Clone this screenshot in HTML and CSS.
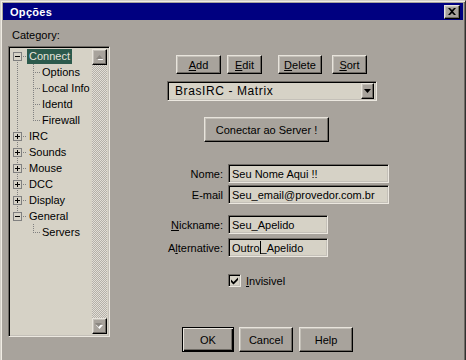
FILE: index.html
```html
<!DOCTYPE html>
<html lang="pt">
<head>
  <meta charset="UTF-8" />
  <title>Opções</title>
  <link rel="stylesheet" href="styles.css">
</head>
<body>
  <div class="window">
    <div class="titlebar">
      <span class="title">Opções</span>
      <span class="close raised">
        <svg width="8" height="7" viewBox="0 0 8 7"><path d="M0 0h2l2 2 2-2h2L5 3.5 8 7H6L4 5 2 7H0l3-3.5z" fill="#000"/></svg>
      </span>
    </div>

    <div class="dialog">
      <div class="left">
        <div class="cat-label">Category:</div>
        <div class="tree sunken">
          <ul class="tree-list">
            <li class="node"><span class="exp minus"></span><span class="conn"></span><span class="label selected">Connect</span></li>
            <li class="leaf"><span class="branch"></span><span class="label">Options</span></li>
            <li class="leaf"><span class="branch"></span><span class="label">Local Info</span></li>
            <li class="leaf"><span class="branch"></span><span class="label">Identd</span></li>
            <li class="leaf"><span class="branch last"></span><span class="label">Firewall</span></li>
            <li class="node"><span class="exp plus"></span><span class="conn"></span><span class="label">IRC</span></li>
            <li class="node"><span class="exp plus"></span><span class="conn"></span><span class="label">Sounds</span></li>
            <li class="node"><span class="exp plus"></span><span class="conn"></span><span class="label">Mouse</span></li>
            <li class="node"><span class="exp plus"></span><span class="conn"></span><span class="label">DCC</span></li>
            <li class="node"><span class="exp plus"></span><span class="conn"></span><span class="label">Display</span></li>
            <li class="node"><span class="exp minus"></span><span class="conn"></span><span class="label">General</span></li>
            <li class="leaf"><span class="branch last"></span><span class="label">Servers</span></li>
          </ul>
          <div class="scrollbar">
            <span class="sb-btn raised">
              <svg width="7" height="5" viewBox="0 0 7 5"><path d="M3.5 1 6.5 4h-6z" fill="#fff" transform="translate(1 1)"/><path d="M3.5 0 7 4H0z" fill="#8a8680"/></svg>
            </span>
            <span class="sb-track"></span>
            <span class="sb-btn raised">
              <svg width="8" height="6" viewBox="0 0 8 6"><path d="M0 1h7L3.5 5z" fill="#fff" transform="translate(1 1)"/><path d="M0 0h7L3.5 4z" fill="#8a8680"/></svg>
            </span>
          </div>
        </div>
      </div>

      <div class="right">
        <div class="toolbar">
          <span class="btn raised w-add"><u>A</u>dd</span>
          <span class="btn raised w-edit"><u>E</u>dit</span>
          <span class="btn raised w-delete"><u>D</u>elete</span>
          <span class="btn raised w-sort"><u>S</u>ort</span>
        </div>

        <div class="combo sunken">
          <span class="combo-text">BrasIRC - Matrix</span>
          <span class="combo-btn raised">
            <svg width="7" height="4" viewBox="0 0 7 4"><path d="M0 0h7L3.5 4z" fill="#000"/></svg>
          </span>
        </div>

        <span class="btn raised connect">Conectar ao Server !</span>

        <div class="fields">
          <label class="f-label">Nome:</label>
          <span class="field sunken">Seu Nome Aqui !!</span>
          <label class="f-label">E-mail</label>
          <span class="field sunken">Seu_email@provedor.com.br</span>
        </div>

        <div class="fields nick">
          <label class="f-label"><u>N</u>ickname:</label>
          <span class="field sunken">Seu_Apelido</span>
          <label class="f-label">A<u>l</u>ternative:</label>
          <span class="field sunken">Outro<i class="caret"></i>_Apelido</span>
        </div>

        <div class="check-row">
          <span class="checkbox sunken">
            <svg width="9" height="9" viewBox="0 0 9 9"><path d="M1 3.5 3.5 6 8 1.5V4L3.5 8.5 1 6z" fill="#000"/></svg>
          </span>
          <span><u>I</u>nvisivel</span>
        </div>

        <div class="actions">
          <span class="btn default w-ok">OK</span>
          <span class="btn raised w-cancel">Cancel</span>
          <span class="btn raised w-help">Help</span>
        </div>
      </div>
    </div>
  </div>
</body>
</html>
```

FILE: styles.css
```css
body {
  margin: 0;
  font-family: 'Liberation Sans', Arial, sans-serif;
  font-size: 11px;
  color: #000;
  background: #a8a39c;
}

.window {
  width: 466px;
  height: 362px;
  box-sizing: border-box;
  padding: 2px;
  border: 1px solid;
  border-color: #d4d0c8 #303030 #303030 #d4d0c8;
  box-shadow: inset 1px 1px #f0ece4, inset -1px -1px #6e6a64;
  background: #a8a39c;
  overflow: hidden;
}

.titlebar {
  height: 17px;
  background: #000080;
  display: flex;
  align-items: center;
  padding: 0 3px 0 7px;
}

.title {
  color: #fff;
  font-weight: bold;
  font-size: 11px;
  letter-spacing: 0.3px;
  flex: 1;
}

/* 3d borders */
.raised {
  box-sizing: border-box;
  border: 1px solid;
  border-color: #e8e4dc #000 #000 #e8e4dc;
  box-shadow: inset -1px -1px #6e6a64, inset 1px 1px #c4c0b8;
  background: #a8a39c;
}

.sunken {
  box-sizing: border-box;
  border: 1px solid;
  border-color: #6e6a64 #ece8e0 #ece8e0 #6e6a64;
  box-shadow: inset 1px 1px #000, inset -1px -1px #c4c0b8;
  background: #d6d2c6;
}

.close {
  width: 16px;
  height: 14px;
  display: flex;
  align-items: center;
  justify-content: center;
}

.dialog {
  display: flex;
}

/* left column */
.left {
  padding-left: 5px;
  width: 102px;
}

.cat-label {
  padding-left: 4px;
  margin-top: 9px;
  line-height: 13px;
}

.tree {
  margin-top: 4px;
  height: 291px;
  display: flex;
  padding: 2px;
}

.tree-list {
  list-style: none;
  margin: -1px 0 0;
  padding: 0;
  flex: 1;
  background: repeating-linear-gradient(to bottom, #808080 0 1px, transparent 1px 2px) 6px 8px / 1px 160px no-repeat;
}

.tree-list li {
  height: 16px;
  display: flex;
  align-items: center;
}

.exp {
  width: 9px;
  height: 9px;
  margin-left: 2px;
  box-sizing: border-box;
  border: 1px solid #808080;
  background: #d6d2c6;
  display: flex;
  align-items: center;
  justify-content: center;
}

.exp::before {
  content: "";
  width: 5px;
  height: 1px;
  background: #000;
}

.plus {
  background-image: linear-gradient(#000, #000);
  background-size: 1px 5px;
  background-position: center;
  background-repeat: no-repeat;
}

.conn {
  width: 5px;
  height: 1px;
  background: repeating-linear-gradient(to right, transparent 0 1px, #808080 1px 2px);
}

.label {
  padding: 1px 2px;
  line-height: 13px;
  white-space: nowrap;
}

.selected {
  background: #2c5a4c;
  color: #e8e4dc;
}

.leaf {
  padding-left: 22px;
}

.branch {
  width: 7px;
  height: 16px;
  align-self: stretch;
  background:
    repeating-linear-gradient(to bottom, #808080 0 1px, transparent 1px 2px) 0 0 / 1px 100% no-repeat,
    repeating-linear-gradient(to right, #808080 0 1px, transparent 1px 2px) 0 8px / 100% 1px no-repeat;
}

.branch.last {
  background:
    repeating-linear-gradient(to bottom, #808080 0 1px, transparent 1px 2px) 0 0 / 1px 9px no-repeat,
    repeating-linear-gradient(to right, #808080 0 1px, transparent 1px 2px) 0 8px / 100% 1px no-repeat;
}

.scrollbar {
  width: 16px;
  display: flex;
  flex-direction: column;
}

.sb-btn {
  height: 16px;
  display: flex;
  align-items: center;
  justify-content: center;
}

.sb-track {
  flex: 1;
  background: repeating-conic-gradient(#e2ded6 0 25%, #b4b0a8 0 50%) 0 0 / 2px 2px;
}

/* right column */
.right {
  flex: 1;
  display: flex;
  flex-direction: column;
  align-items: flex-start;
}

.btn {
  display: flex;
  align-items: center;
  justify-content: center;
  height: 19px;
  white-space: nowrap;
}

.toolbar {
  display: flex;
  margin: 35px 0 0 66px;
}

.w-add { width: 45px; }
.w-edit { width: 35px; margin-left: 6px; }
.w-delete { width: 44px; margin-left: 16px; }
.w-sort { width: 35px; margin-left: 10px; }

.combo {
  margin: 7px 0 0 57px;
  width: 210px;
  height: 20px;
  padding: 2px;
  display: flex;
  align-items: center;
}

.combo-text {
  flex: 1;
  padding-left: 5px;
  font-size: 12px;
  letter-spacing: 0.6px;
}

.combo-btn {
  width: 13px;
  height: 16px;
  display: flex;
  align-items: center;
  justify-content: center;
}

.connect {
  margin: 16px 0 0 94px;
  width: 125px;
  height: 25px;
}

.fields {
  display: grid;
  grid-template-columns: 113px 161px;
  column-gap: 5px;
  row-gap: 2px;
  margin-top: 22px;
}

.fields.nick {
  grid-template-columns: 113px 100px;
  row-gap: 4px;
  margin-top: 11px;
}

.f-label {
  text-align: right;
  align-self: center;
}

.field {
  height: 19px;
  padding: 0 3px;
  display: flex;
  align-items: center;
  white-space: nowrap;
}

.caret {
  display: inline-block;
  width: 1px;
  height: 13px;
  background: #000;
}

.check-row {
  display: flex;
  align-items: center;
  gap: 5px;
  margin: 17px 0 0 118px;
}

.checkbox {
  width: 13px;
  height: 13px;
  display: flex;
  align-items: center;
  justify-content: center;
}

.actions {
  display: flex;
  margin: 40px 0 0 72px;
}

.actions .btn {
  height: 25px;
}

.default {
  box-sizing: border-box;
  border: 1px solid #000;
  box-shadow: inset 1px 1px #e8e4dc, inset -1px -1px #000, inset -2px -2px #6e6a64;
  background: #a8a39c;
}

.w-ok { width: 52px; }
.w-cancel { width: 54px; margin-left: 5px; }
.w-help { width: 54px; margin-left: 6px; }
```
